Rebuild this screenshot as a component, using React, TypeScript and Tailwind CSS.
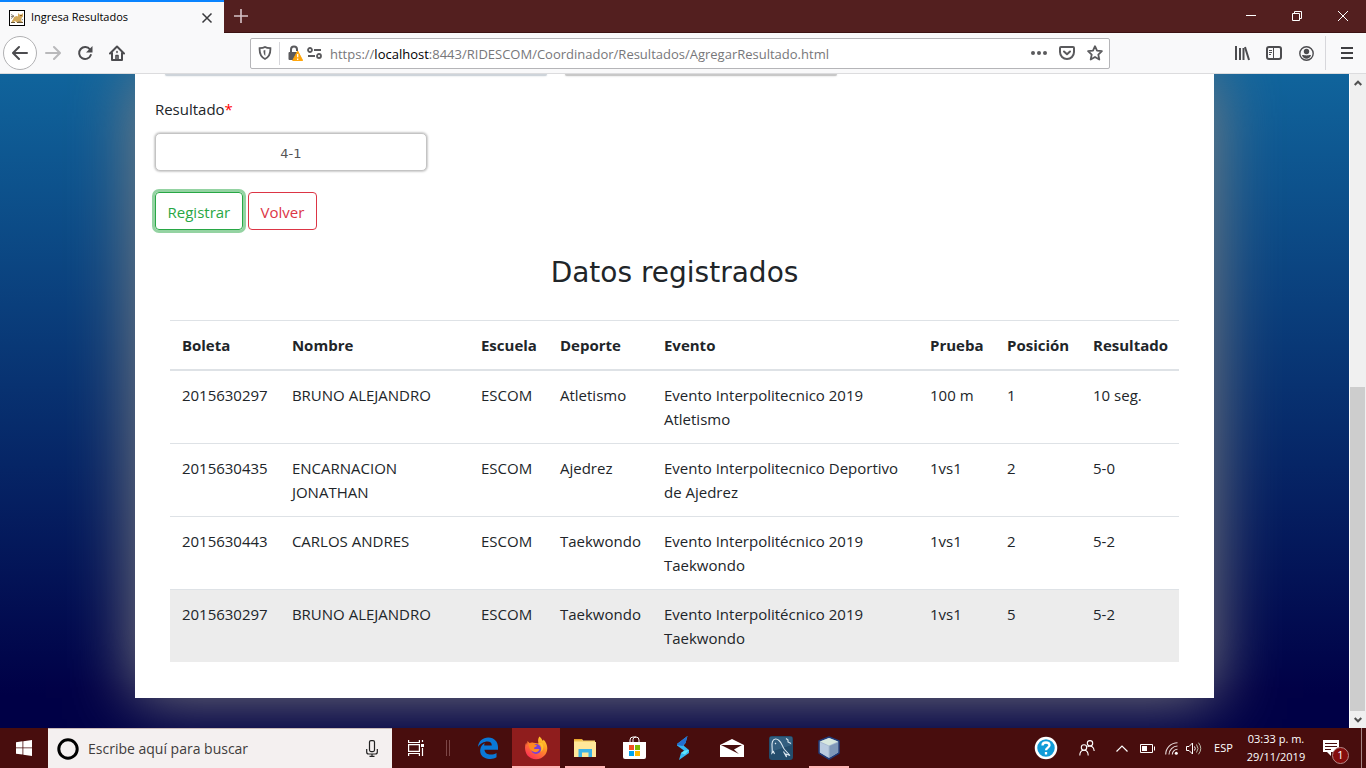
import type { ReactNode } from "react";

type Row = {
  boleta: string;
  nombre: string;
  escuela: string;
  deporte: string;
  evento: string;
  prueba: string;
  posicion: string;
  resultado: string;
};

const rows: Row[] = [
  { boleta: "2015630297", nombre: "BRUNO ALEJANDRO", escuela: "ESCOM", deporte: "Atletismo", evento: "Evento Interpolitecnico 2019 Atletismo", prueba: "100 m", posicion: "1", resultado: "10 seg." },
  { boleta: "2015630435", nombre: "ENCARNACION JONATHAN", escuela: "ESCOM", deporte: "Ajedrez", evento: "Evento Interpolitecnico Deportivo de Ajedrez", prueba: "1vs1", posicion: "2", resultado: "5-0" },
  { boleta: "2015630443", nombre: "CARLOS ANDRES", escuela: "ESCOM", deporte: "Taekwondo", evento: "Evento Interpolitécnico 2019 Taekwondo", prueba: "1vs1", posicion: "2", resultado: "5-2" },
  { boleta: "2015630297", nombre: "BRUNO ALEJANDRO", escuela: "ESCOM", deporte: "Taekwondo", evento: "Evento Interpolitécnico 2019 Taekwondo", prueba: "1vs1", posicion: "5", resultado: "5-2" },
];

const headers = ["Boleta", "Nombre", "Escuela", "Deporte", "Evento", "Prueba", "Posición", "Resultado"];

function IconButton({ label, className, children }: { label: string; className: string; children: ReactNode }) {
  return (
    <button type="button" aria-label={label} className={`flex shrink-0 items-center justify-center ${className}`}>
      {children}
    </button>
  );
}

function TitleBar() {
  return (
    <div className="flex h-[33px] shrink-0 border-b border-[#3c1212] bg-[#531f1f]">
      <div className="-mb-px flex w-56 items-center border-t-2 border-[#0a84ff] bg-[#f9f9fa] pr-[7px] pl-[9px]">
        <svg width="16" height="16" viewBox="0 0 16 16" className="shrink-0">
          <path d="M.5.5h15v15H.5z" fill="#fff" />
          <path d="M2.500 11.500 4 9.500l1-2.500 2.500-1L9 6.500V3l1.500 1.500h2L14 3v3.500L12.500 8l-.5 2 2 2.500H8L6 11l-2 1.500z" fill="#d3a95c" />
          <path d="M2 4.500 5 6 3.500 7.500 2 8.500M2 6.500h3M12.500 9l1.500 1M9.500 11.500l3 1" fill="none" stroke="#8a8275" />
          <path d="M2 12.500h4M8 12.500h6" stroke="#6b5a3a" />
          <path d="M11 5.500h2" stroke="#8b5a1e" />
          <rect x="0.5" y="0.5" width="15" height="15" fill="none" stroke="#000" />
        </svg>
        <span className="ml-1.5 flex-1 text-[11px] text-black">Ingresa Resultados</span>
        <IconButton label="Cerrar pestaña" className="size-5">
          <svg width="12" height="12" viewBox="0 0 12 12" stroke="#3a3a3d" strokeWidth="1.500">
            <path d="M1.500 1.500 10.500 10.500M10.500 1.500 1.500 10.500" />
          </svg>
        </IconButton>
      </div>
      <IconButton label="Nueva pestaña" className="w-[34px]">
        <svg width="14" height="14" viewBox="0 0 14 14" stroke="#d6c3c8" strokeWidth="1.600">
          <path d="M7 0v14M0 7h14" />
        </svg>
      </IconButton>
      <div className="flex-1" />
      <IconButton label="Minimizar" className="w-[46px]">
        <svg width="10" height="10" viewBox="0 0 10 10" stroke="#fff"><path d="M0 4.500h10" /></svg>
      </IconButton>
      <IconButton label="Restaurar" className="w-[46px]">
        <svg width="10" height="10" viewBox="0 0 10 10" fill="none" stroke="#fff"><path d="M.5 2.500h7v7h-7zM2.500 2.500v-2h7v7h-2" /></svg>
      </IconButton>
      <IconButton label="Cerrar" className="w-[46px]">
        <svg width="10" height="10" viewBox="0 0 10 10" stroke="#fff"><path d="M0 0 10 10M10 0 0 10" /></svg>
      </IconButton>
    </div>
  );
}

function Toolbar() {
  return (
    <div className="flex h-[41px] shrink-0 items-center border-b border-[#dcdcde] bg-[#f9f9fa] pl-[3px]">
      <IconButton label="Atrás" className="size-[34px] rounded-full border border-[#b1b1b3] bg-white">
        <svg width="16" height="16" viewBox="0 0 16 16" fill="none" stroke="#4c4c4f" strokeWidth="2" strokeLinecap="round" strokeLinejoin="round">
          <path d="M15 8H1.500M7 2 1 8l6 6" />
        </svg>
      </IconButton>
      <IconButton label="Adelante" className="size-8">
        <svg width="16" height="16" viewBox="0 0 16 16" fill="none" stroke="#b9b9bb" strokeWidth="2" strokeLinecap="round" strokeLinejoin="round">
          <path d="M1 8h13.500M9 2l6 6-6 6" />
        </svg>
      </IconButton>
      <IconButton label="Recargar" className="size-8">
        <svg width="16" height="16" viewBox="0 0 16 16" fill="none" stroke="#4c4c4f" strokeWidth="2">
          <path d="M13 4.500A6 6 0 1 0 13.800 10" strokeLinecap="round" />
          <path d="M15.500 1v6.500H9z" fill="#4c4c4f" stroke="none" />
        </svg>
      </IconButton>
      <IconButton label="Inicio" className="size-8">
        <svg width="16" height="16" viewBox="0 0 16 16" fill="none" stroke="#4c4c4f" strokeWidth="2" strokeLinecap="round" strokeLinejoin="round">
          <path d="M1 8.500 8 1.500l7 7M3 8v7h10V8" />
          <path d="M7 14.500V10.500h2v4" strokeWidth="1.600" />
          <path d="M8 6.500v1" strokeWidth="1.500" />
        </svg>
      </IconButton>

      <div className="mr-[116px] ml-[117px] flex h-[31px] flex-1 items-center rounded-xs border border-[#b5b5b8] bg-white">
        <div className="flex h-[23px] w-[29px] items-center justify-center border-r border-[#d7d7db]">
          <svg width="14" height="14" viewBox="0 0 14 14" fill="none" stroke="#5a5a5d" strokeWidth="1.800">
            <path d="M7 1C5.500 2 3.500 2.200 1.600 2.200 1.400 7 2.500 11 7 13c4.500-2 5.600-6 5.400-10.800C10.500 2.200 8.500 2 7 1z" />
            <path d="M7.300 4v6C6 9 5.500 7 5.500 4.500z" fill="#5a5a5d" stroke="none" />
          </svg>
        </div>
        <svg width="15" height="16" viewBox="0 0 15 16" className="ml-2 shrink-0">
          <path d="M3 8V4.500a3 3 0 0 1 6 0V6" fill="none" stroke="#5a5a5d" strokeWidth="2" />
          <rect x="0.500" y="7" width="9" height="8" rx="1" fill="#5a5a5d" />
          <path d="m9.700 6 5 9.500H4.700z" fill="#ffa60c" stroke="#ffa60c" strokeLinejoin="round" />
          <path d="M9.700 9v3.300M9.700 13.500V15" stroke="#fff" strokeWidth="1.300" />
        </svg>
        <svg width="15" height="12" viewBox="0 0 15 12" fill="none" stroke="#5a5a5d" strokeWidth="1.800" className="ml-1 shrink-0">
          <circle cx="3" cy="3" r="2" /><path d="M7 3h7M1 9h7" /><circle cx="12" cy="9" r="2" />
        </svg>
        <div className="relative ml-2 h-6 flex-1 text-[13px] leading-[26px]">
          <input aria-label="Dirección" type="text" defaultValue="https://localhost:8443/RIDESCOM/Coordinador/Resultados/AgregarResultado.html" className="h-6 w-full text-transparent outline-none" />
          <div aria-hidden="true" className="pointer-events-none absolute inset-0 text-[#77777a]">
            https://<span className="text-black">localhost</span>:8443/RIDESCOM/Coordinador/Resultados/AgregarResultado.html
          </div>
        </div>
        <IconButton label="Acciones" className="w-7">
          <svg width="16" height="4" viewBox="0 0 16 4" fill="#5a5a5d"><circle cx="2" cy="2" r="2" /><circle cx="8" cy="2" r="2" /><circle cx="14" cy="2" r="2" /></svg>
        </IconButton>
        <IconButton label="Guardar en Pocket" className="w-7">
          <svg width="16" height="14" viewBox="0 0 16 14" fill="none" stroke="#5a5a5d" strokeWidth="2" strokeLinecap="round" strokeLinejoin="round">
            <path d="M2 1h12a1 1 0 0 1 1 1v4a7 7 0 0 1-14 0V2a1 1 0 0 1 1-1z" /><path d="M5 5.500 8 8.300l3-2.800" />
          </svg>
        </IconButton>
        <IconButton label="Marcador" className="w-7">
          <svg width="16" height="16" viewBox="0 0 16 16" fill="none" stroke="#5a5a5d" strokeWidth="1.800" strokeLinejoin="round">
            <path d="m8 1.200 2 4.500 4.900.5-3.600 3.400 1 4.900L8 12l-4.300 2.500 1-4.900L1.100 6.200 6 5.700z" />
          </svg>
        </IconButton>
      </div>

      <IconButton label="Biblioteca" className="size-8">
        <svg width="16" height="16" viewBox="0 0 16 16" fill="none" stroke="#4c4c4f" strokeWidth="2">
          <path d="M2 1v14M6 3v12M9.500 3v12" /><path d="m11 2 4 13" />
        </svg>
      </IconButton>
      <IconButton label="Barra lateral" className="size-8">
        <svg width="16" height="14" viewBox="0 0 16 14" fill="none" stroke="#4c4c4f">
          <rect x="1" y="1" width="14" height="12" rx="2" strokeWidth="2" /><path d="M7.500 1v12M3 4.500h3M3 6.500h3M3 8.500h2" />
        </svg>
      </IconButton>
      <IconButton label="Cuenta" className="size-8">
        <svg width="15" height="15" viewBox="0 0 15 15" fill="none">
          <circle cx="7.500" cy="7.500" r="6.700" stroke="#4c4c4f" strokeWidth="1.400" /><circle cx="7.500" cy="5.500" r="2.700" fill="#4c4c4f" />
          <path d="M3 9.300c1-.6 2 .2 4.500.2s3.500-.8 4.500-.2c-.7 2.300-2.300 3.500-4.500 3.500S3.700 11.600 3 9.300z" fill="#4c4c4f" />
        </svg>
      </IconButton>
      <div className="ml-[3px] h-[34px] w-px bg-[#d7d7db]" />
      <IconButton label="Menú" className="w-10 pl-0.5">
        <svg width="12" height="12" viewBox="0 0 12 12" stroke="#3f3f42" strokeWidth="2"><path d="M0 1h12M0 6h12M0 11h12" /></svg>
      </IconButton>
    </div>
  );
}

function Scrollbar() {
  return (
    <div className="flex w-[17px] shrink-0 flex-col border-l border-white bg-[#f0f0f0]">
      <div className="flex h-[17px] items-center justify-center">
        <svg width="8" height="6" viewBox="0 0 8 6" fill="none" stroke="#505050" strokeWidth="2"><path d="m.7 5 3.300-3.300L7.300 5" /></svg>
      </div>
      <div className="flex-[296]" />
      <div className="mr-px flex-[324] bg-[#cdcdcd]" />
      <div className="flex h-[17px] items-center justify-center">
        <svg width="8" height="6" viewBox="0 0 8 6" fill="none" stroke="#505050" strokeWidth="2"><path d="m.7 1 3.300 3.300L7.300 1" /></svg>
      </div>
    </div>
  );
}

function ResultsTable() {
  return (
    <table className="w-full table-fixed border-collapse text-[15px] leading-6 text-[#212529]">
      <colgroup>
        <col className="w-[110px]" />
        <col className="w-[189px]" />
        <col className="w-[79px]" />
        <col className="w-[104px]" />
        <col className="w-[266px]" />
        <col className="w-[77px]" />
        <col className="w-[86px]" />
        <col className="w-[98px]" />
      </colgroup>
      <thead>
        <tr>
          {headers.map((h) => (
            <th key={h} scope="col" className="border-t border-b-2 border-[#dee2e6] p-3 text-left font-bold whitespace-nowrap">{h}</th>
          ))}
        </tr>
      </thead>
      <tbody>
        {rows.map((r, i) => (
          <tr key={i} className="last:bg-[#ececec]">
            {Object.values(r).map((v, j) => (
              <td key={j} className="border-t border-[#dee2e6] p-3 align-top">{v}</td>
            ))}
          </tr>
        ))}
      </tbody>
    </table>
  );
}

function Page() {
  return (
    <main className="min-w-0 flex-1 overflow-hidden bg-linear-to-b/srgb from-[#10649c] to-[#000046] to-95% pb-[30px]">
      <div className="mx-auto w-4/5 bg-white px-5 pb-9 shadow-[0_0_60px_#808080]">
        <div className="flex gap-[18px] pl-2.5">
          <div className="h-[2px] w-[382px] rounded-b-lg bg-[#ced4da] shadow-[0_0_2px_#ced4da]" />
          <div className="h-[2px] w-[272px] rounded-b-lg bg-[#c8c8c8] shadow-[0_0_2px_#c8c8c8]" />
        </div>
        <form className="pt-[21px]" onSubmit={(e) => e.preventDefault()}>
          <label htmlFor="resultado" className="block text-[15px] leading-6 text-[#212529]">
            Resultado<span className="text-[#ff0000]">*</span>
          </label>
          <input id="resultado" type="text" defaultValue="4-1" className="mt-3 block h-[38px] w-[272px] rounded-[5px] border border-[#c4c4c4] bg-white pt-0.5 text-center font-['DejaVu_Sans',sans-serif] text-[13px] text-[#555] shadow-[0_0_2px_1px_#ccc] outline-none" />
          <div className="mt-[21px] flex gap-[5px] text-[15px] leading-6">
            <button type="submit" className="w-[88px] rounded-sm border border-[#28a745] pt-[7px] pb-[5px] text-[#28a745] ring-3 ring-[#94d3a2]">Registrar</button>
            <button type="button" className="w-[69px] rounded-sm border border-[#dc3545] pt-[7px] pb-[5px] text-[#dc3545]">Volver</button>
          </div>
        </form>
        <h2 className="mt-[26px] mb-[30px] text-center font-['DejaVu_Sans',sans-serif] text-[28px] leading-[34px] text-[#212529]">Datos registrados</h2>
        <div className="px-[15px]">
          <ResultsTable />
        </div>
      </div>
    </main>
  );
}

function Taskbar() {
  return (
    <footer className="flex h-10 shrink-0 bg-[#480d0d] text-white">
      <IconButton label="Inicio de Windows" className="w-12">
        <svg width="16" height="16" viewBox="0 0 16 16" fill="#fff"><path d="M0 2.200 6.500 1.300v6.200H0zM7.300 1.200 16 0v7.500H7.300zM0 8.300h6.500v6.200L0 13.700zM7.300 8.300H16V16l-8.700-1.300z" /></svg>
      </IconButton>
      <div className="flex w-[344px] items-center border-t border-[#c9b9b9] bg-[#f4f0f0] pr-[14px] pl-[9px]">
        <svg width="22" height="22" viewBox="0 0 22 22" fill="none" className="shrink-0"><circle cx="11" cy="11" r="9.200" stroke="#000" strokeWidth="3" /></svg>
        <input aria-label="Buscar" type="text" placeholder="Escribe aquí para buscar" className="ml-[9px] min-w-0 flex-1 text-sm outline-none placeholder:text-[#403c3c]" />
        <svg width="12" height="17" viewBox="0 0 12 17" fill="none" stroke="#222" strokeWidth="1.200"><rect x="3.500" y="0.600" width="5" height="11" rx="1.500" /><path d="M.7 9v3q0 2 2 2h6.600q2 0 2-2V9M6 14v2.500M3.500 16.400h5" /></svg>
      </div>
      <IconButton label="Vista de tareas" className="w-12">
        <svg width="17" height="16" viewBox="0 0 17 16" fill="none" stroke="#fff" strokeWidth="1.200"><path d="M.6 0v2.500h10.800V0M.6 16v-2.500h10.800V16M.6 4.600h10.800v6.800H.6zM14.500 0v2M14.500 8v8" /><path d="M13 4h3v3h-3z" fill="#fff" stroke="none" /></svg>
      </IconButton>
      <div className="flex w-[23px] items-center justify-center pr-[7px]">
        <svg width="4" height="16" viewBox="0 0 4 16" stroke="#7d4646"><path d="M.5 0v16M3.500 0v16" /></svg>
      </div>
      <nav aria-label="Aplicaciones" className="flex">
        <IconButton label="Edge" className="w-[49px]">
          <svg width="22" height="22" viewBox="0 0 22 22"><path d="M1 10C1.500 4 6 .5 11.200.5 17.500.5 21 5 21 10v2.700H7.500c.2 5 7.500 6.200 12 3.300v4.300C13 24 2.500 21.800 3.200 13c.3-3.500 2-5.500 4.500-7-.3.800-.5 1.600-.5 2.600h7.600c0-2.800-1.500-4-4.300-4C7 4.600 3 6.800 1 10z" fill="#0a78d7" /></svg>
        </IconButton>
        <IconButton label="Firefox" className="w-12 border-b-2 border-[#ffb5b5] bg-[#8f1d1d] pt-[2px]">
          <svg width="24" height="24" viewBox="0 0 24 24">
            <defs><linearGradient id="fx" x1="1" y1="0" x2="0.300" y2="1"><stop offset="0" stopColor="#ffe52e" /><stop offset="0.450" stopColor="#ff9326" /><stop offset="1" stopColor="#ff3154" /></linearGradient></defs>
            <path d="M15.500.5c2 1.500 2.200 3.200 3.500 4.500l.5-1.500C24 8 24.500 14.500 21 19c-4.500 5.500-13 5.500-17.500.5C.8 16 .2 10.500 2.200 6.500L3 9l.5-4 2 2c1.500-.7 2.800-.8 4-.2l5 .7c-.8-2.500-.5-5 1-7z" fill="url(#fx)" />
            <circle cx="12" cy="13" r="5" fill="#7940d8" />
            <path d="M4.500 8.500c2-1.500 4-1.200 5.500-.5l3 1.500c-.5 1.500-3 1.500-3 2.500 0 1.800 3.500.8 5.500 1-1 3.500-5 4-7.500 2C5.500 13.500 5 11 4.500 8.500z" fill="#ff8a20" />
            <path d="M14 7c3.500 1.500 4.500 5.500 2.500 9 3-1.500 3.800-6 1.500-9z" fill="#ffc22e" />
          </svg>
        </IconButton>
        <IconButton label="Explorador" className="mx-[5px] w-10 border-b-2 border-[#ffb5b5] pt-[2px]">
          <svg width="22" height="18" viewBox="0 0 22 18"><path d="M0 0h8l1 1.500h12V17H0z" fill="#f8d775" /><path d="M0 3h22v15H0z" fill="#ffe79a" /><path d="M0 0h8v1.500H0z" fill="#e9a72c" /><path d="M4.500 10H18v8h-3.500v-4.500H8V18H4.500z" fill="#3cb4e8" /></svg>
        </IconButton>
        <IconButton label="Microsoft Store" className="w-12">
          <svg width="23" height="24" viewBox="0 0 23 24"><path d="M7 7V4q0-3 3-3h3q3 0 3 3v3M10 6V3.500q0-2.500 3-2.500" fill="none" stroke="#fff" /><path d="M0 6h23v15q0 2-2 2H2q-2 0-2-2z" fill="#fff" /><path d="M6 9h5v5H6z" fill="#f05022" /><path d="M12 9h5v5h-5z" fill="#7fba00" /><path d="M6 15h5v5H6z" fill="#00a4ef" /><path d="M12 15h5v5h-5z" fill="#ffb900" /></svg>
        </IconButton>
        <IconButton label="Asistente" className="w-[49px]">
          <svg width="14" height="24" viewBox="0 0 14 24"><path d="M11.500 0 9.500 7l-2 2.500L13 14v3L3 24l2-7 3-2.500-7-5V8z" fill="#35b6f2" /><path d="M11.500 0 9.500 7l-3 3L1 9V8z" fill="#236fd0" /><path d="m13 14-4 4.500L5 17l4-2.500z" fill="#62e5fa" /></svg>
        </IconButton>
        <IconButton label="Correo" className="w-[49px]">
          <svg width="24" height="18" viewBox="0 0 24 18"><path d="M12 0 24 6v12H0V6z" fill="#fff" /><path d="M1 6h21l-8 4.500 5 4.500z" fill="#480d0d" /></svg>
        </IconButton>
        <IconButton label="MySQL Workbench" className="w-[49px]">
          <svg width="24" height="24" viewBox="0 0 24 24"><rect width="24" height="24" rx="3" fill="#234d6c" /><path d="M1 1h22v8L1 16z" fill="#3d6d8c" opacity=".6" /><path d="M5.500 18 4.500 15.500 3 17C4 13 2 9 3.500 5.500 5 2 8 2.500 10 4.500c3.500 3 3 6 5.500 9l5.500 6-4-1.500.5 3-3-5.500M6 7l1 1M17 2.500l2 1.500v2l3 1.500" fill="none" stroke="#dce9f1" strokeWidth="1.100" /></svg>
        </IconButton>
        <IconButton label="NetBeans" className="mx-1 w-10 border-b-2 border-[#ffb5b5] pt-[2px]">
          <svg width="24" height="24" viewBox="0 0 24 24" stroke="#203b78" strokeWidth="1.500" strokeLinejoin="round"><path d="m12 1 10 4v12l-10 6-10-6V5z" fill="#a4b8cf" /><path d="m12 2 9 3.500-9 4-9-4z" fill="#d8e8df" stroke="none" /><path d="M3 6.500 11.500 10v11.500L3 16.500z" fill="#b9cbe0" stroke="none" /><path d="M21 6.500 12.500 10v11.500l8.500-5z" fill="#7e97b8" stroke="none" /></svg>
        </IconButton>
      </nav>
      <div className="flex-1" />
      <IconButton label="Ayuda" className="w-10">
        <svg width="24" height="24" viewBox="0 0 24 24" fill="none"><circle cx="12" cy="12" r="10" fill="#109bd8" stroke="#fff" strokeWidth="2.500" /><path d="M8.500 9.500Q8.500 6.500 12 6.500t3.500 2.800c0 2.200-3.500 2.400-3.500 5M12 16v2.500" stroke="#fff" strokeWidth="2.300" /></svg>
      </IconButton>
      <IconButton label="Contactos" className="w-[42px]">
        <svg width="16" height="16" viewBox="0 0 16 16" fill="none" stroke="#fff" strokeWidth="1.100"><circle cx="5" cy="7.500" r="2.700" /><path d="M.8 15.500c0-7 8.400-7 8.400 0" /><circle cx="11" cy="3.300" r="2.700" /><path d="M8.500 6.800c3-2 6.500 0 6.700 4.200" /></svg>
      </IconButton>
      <IconButton label="Iconos ocultos" className="w-[27px]">
        <svg width="12" height="7" viewBox="0 0 12 7" fill="none" stroke="#fff" strokeWidth="1.200"><path d="m.5 6.500 5.500-5.500 5.500 5.500" /></svg>
      </IconButton>
      <IconButton label="Batería" className="w-6">
        <svg width="15" height="9" viewBox="0 0 15 9" fill="none" stroke="#fff"><path d="M.5.5h12v8H.5zM14.500 2.500v4" /><path d="M2 2h5v5H2z" fill="#fff" stroke="none" /></svg>
      </IconButton>
      <IconButton label="Red" className="w-6">
        <svg width="13" height="13" viewBox="0 0 13 13" fill="none" stroke="#e8dada" strokeWidth="1.100"><path d="M.7 12.500C.7 6 6 .7 12.500.7M4 12.500C4 8 8 4 12.500 4M7.300 12.500c0-3 2.200-5.200 5.200-5.200" /><circle cx="11.300" cy="11.300" r="1.500" fill="#fff" stroke="none" /></svg>
      </IconButton>
      <IconButton label="Volumen" className="w-[22px]">
        <svg width="16" height="13" viewBox="0 0 16 13" fill="none" stroke="#fff"><path d="M.5 4.500H3L6.500 1v11L3 8.500H.5zM8.500 4.500q1.500 2 0 4" /><path d="M10.500 2.500q3 4 0 8M12.500.7q4.500 5.800 0 11.600" stroke="#bba" /></svg>
      </IconButton>
      <button type="button" className="w-[37px] text-[11px]">ESP</button>
      <button type="button" className="flex w-[68px] flex-col items-center justify-center text-[11px] leading-[18px] whitespace-nowrap">
        <span>03:33 p. m.</span>
        <span>29/11/2019</span>
      </button>
      <button type="button" aria-label="Notificaciones: 1" className="relative flex w-[52px] items-center justify-center border-r border-[#a58686] pr-2.5">
        <svg width="16" height="16" viewBox="0 0 16 16"><path d="M0 0h16v12H8v4l-4-4H0z" fill="#fff" /><path d="M2 3.500h12M2 6.500h12M2 9.500h6" stroke="#480d0d" /></svg>
        <span className="absolute top-[19px] left-[22px] flex size-[17px] items-center justify-center rounded-full border border-[#b58a8a] bg-[#850d0d] text-[11px]">1</span>
      </button>
      <div className="w-1" />
    </footer>
  );
}

export default function App() {
  return (
    <div className="flex min-h-screen flex-col font-['Open_Sans','Noto_Sans',sans-serif]">
      <TitleBar />
      <Toolbar />
      <div className="flex flex-1">
        <Page />
        <Scrollbar />
      </div>
      <Taskbar />
    </div>
  );
}
